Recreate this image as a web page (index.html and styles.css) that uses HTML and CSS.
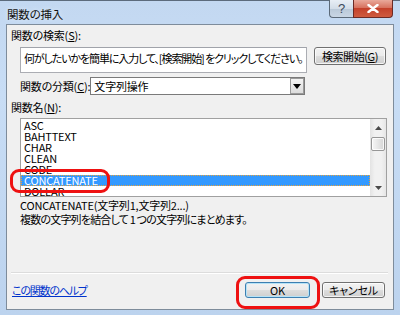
FILE: index.html
```html
<!DOCTYPE html>
<html lang="ja">
<head>
<meta charset="utf-8">
<title>関数の挿入</title>
<link rel="stylesheet" href="styles.css">
</head>
<body>
<div class="window">
  <div class="titlebar">
    <span class="title">関数の挿入</span>
    <div class="caption-btns">
      <div class="cap-help">?</div>
      <div class="cap-close">
        <svg width="12" height="9" viewBox="0 0 12 9"><path d="M1.5 1 L10.5 8 M10.5 1 L1.5 8" stroke="#fff" stroke-width="2.4" stroke-linecap="round"/></svg>
      </div>
    </div>
  </div>
  <div class="client">
    <div class="label label-top">関数の検索(<u>S</u>):</div>
    <div class="search-row">
      <div class="search-box">何がしたいかを簡単に入力して、[検索開始] をクリックしてください。</div>
      <div class="btn btn-search">検索開始(<u>G</u>)</div>
    </div>
    <div class="cat-row">
      <span class="label cat-label">関数の分類(<u>C</u>):</span>
      <div class="select">
        <span class="select-text">文字列操作</span>
        <span class="select-arrow">
          <svg width="8" height="5" viewBox="0 0 8 5"><path d="M0 0 H8 L4 5 Z" fill="#000"/></svg>
        </span>
      </div>
    </div>
    <div class="label label-list">関数名(<u>N</u>):</div>
    <div class="listbox">
      <ul class="items">
        <li>ASC</li>
        <li>BAHTTEXT</li>
        <li>CHAR</li>
        <li>CLEAN</li>
        <li>CODE</li>
        <li class="selected">CONCATENATE</li>
        <li>DOLLAR</li>
      </ul>
      <div class="scrollbar">
        <div class="sb-btn"><svg width="7" height="4" viewBox="0 0 7 4"><path d="M0 4 L3.5 0 L7 4 Z" fill="#4a4a4a"/></svg></div>
        <div class="sb-track"><div class="sb-thumb"></div></div>
        <div class="sb-btn"><svg width="7" height="4" viewBox="0 0 7 4"><path d="M0 0 L7 0 L3.5 4 Z" fill="#4a4a4a"/></svg></div>
      </div>
    </div>
    <div class="desc">
      <div class="desc-line">CONCATENATE(文字列1,文字列2...)</div>
      <div class="desc-line desc-jp">複数の文字列を結合して 1 つの文字列にまとめます。</div>
    </div>
    <div class="sep"></div>
    <div class="footer">
      <a class="help-link" href="#">この関数のヘルプ</a>
      <div class="footer-btns">
        <div class="btn btn-ok">OK</div>
        <div class="btn btn-cancel">キャンセル</div>
      </div>
    </div>
  </div>
  <div class="annot annot-list"></div>
  <div class="annot annot-ok"></div>
</div>
</body>
</html>
```
FILE: styles.css
```css
* { box-sizing: border-box; }
html, body { margin: 0; padding: 0; }
body {
  width: 400px;
  height: 315px;
  overflow: hidden;
  font-family: "Noto Sans CJK JP", "Liberation Sans", sans-serif;
  font-size: 11px;
  letter-spacing: -0.2px;
  font-feature-settings: "palt";
  color: #000;
}
.window {
  position: relative;
  width: 400px;
  height: 315px;
  padding: 0 6px 5px 6px;
  display: flex;
  flex-direction: column;
  background: linear-gradient(to bottom, #c3d8f1 0%, #c8ddf5 30%, #bcd3ee 100%);
  border-top: 1px solid #5c6b7c;
}
.titlebar {
  height: 23px;
  display: flex;
  justify-content: space-between;
  align-items: flex-start;
  flex: 0 0 auto;
}
.title {
  margin-left: 1px;
  margin-top: 5px;
  line-height: 16px;
  font-size: 11.5px;
  color: #111;
  text-shadow: 0 0 4px #e6f0fb;
}
.caption-btns {
  display: flex;
  margin-top: -1px;
  margin-right: 1px;
}
.cap-help {
  width: 24px;
  height: 18px;
  border: 1px solid #5b6978;
  border-top: none;
  border-right: none;
  border-bottom-left-radius: 4px;
  background: linear-gradient(to bottom, #e8eef5 0%, #d3dde8 50%, #b9c8d8 51%, #c9d6e4 100%);
  color: #3c4a5a;
  font-family: "Liberation Sans", sans-serif;
  font-size: 13px;
  line-height: 17px;
  text-align: center;
}
.cap-close {
  width: 40px;
  height: 18px;
  border: 1px solid #6b2a25;
  border-top: none;
  border-bottom-right-radius: 4px;
  background: linear-gradient(to bottom, #e9a99b 0%, #d7725f 45%, #c4412b 50%, #cf5b3f 100%);
  display: flex;
  align-items: center;
  justify-content: center;
}
.client {
  flex: 1 1 auto;
  background: #f0f0f0;
  border: 1px solid #7e8c9b;
  display: flex;
  flex-direction: column;
}
.label {
  line-height: 14px;
  height: 14px;
  white-space: nowrap;
}
.label-top { margin: 3px 0 0 4px; }
.search-row {
  display: flex;
  gap: 7px;
  margin: 5px 0 0 13px;
  align-items: flex-start;
}
.search-box {
  width: 287px;
  height: 26px;
  background: #fff;
  border: 1px solid #abadb3;
  border-top-color: #a0a3aa;
  padding: 3px 0 0 3px;
  line-height: 14px;
  white-space: nowrap;
  overflow: hidden;
  letter-spacing: -1.1px;
}
.btn {
  height: 18px;
  border: 1px solid #707070;
  border-radius: 3px;
  background: linear-gradient(to bottom, #f2f2f2 0%, #ebebeb 50%, #dddddd 51%, #cfcfcf 100%);
  box-shadow: inset 0 0 0 1px rgba(255,255,255,0.75);
  text-align: center;
  line-height: 16px;
  white-space: nowrap;
}
.btn-search { width: 72px; letter-spacing: -0.4px; }
.cat-row {
  display: flex;
  align-items: center;
  margin: 4px 0 0 13px;
}
.cat-label { flex: 0 0 70px; }
.select {
  width: 215px;
  height: 18px;
  background: #fff;
  border: 1px solid #7a7a7a;
  display: flex;
  align-items: stretch;
}
.select-text {
  flex: 1 1 auto;
  padding-left: 3px;
  line-height: 16px;
}
.select-arrow {
  width: 14px;
  border: 1px solid #9a9a9a;
  background: linear-gradient(to bottom, #f3f3f3, #dcdcdc);
  display: flex;
  align-items: center;
  justify-content: center;
}
.label-list { margin: 5px 0 0 4px; }
.listbox {
  margin: 4px 0 0 13px;
  width: 367px;
  height: 79px;
  border: 1px solid #a0a0a0;
  background: #fff;
  display: flex;
}
.items {
  list-style: none;
  margin: 0;
  padding: 1px 0 0 0;
  flex: 1 1 auto;
  overflow: hidden;
}
.items li {
  height: 11px;
  line-height: 11px;
  padding-left: 3px;
  white-space: nowrap;
}
.items li.selected {
  background: #3399ff;
  color: #fff;
  outline: 1px dotted #e8a33a;
  outline-offset: -1px;
}
.scrollbar {
  width: 16px;
  flex: 0 0 16px;
  display: flex;
  flex-direction: column;
  background: linear-gradient(to right, #e3e3e3, #f1f1f1 30%, #f1f1f1 70%, #e6e6e6);
}
.sb-btn {
  height: 17px;
  display: flex;
  align-items: center;
  justify-content: center;
}
.sb-track {
  flex: 1 1 auto;
  padding: 1px 1px 0 1px;
}
.sb-thumb {
  height: 14px;
  border: 1px solid #979797;
  border-radius: 2px;
  background: linear-gradient(to right, #f6f6f6, #e6e6e6 50%, #d6d6d6);
  box-shadow: inset 0 0 0 1px rgba(255,255,255,0.8);
}
.desc { margin: 1px 0 0 13px; }
.desc-line {
  line-height: 14px;
  height: 14px;
  white-space: nowrap;
}
.desc-jp { letter-spacing: -0.8px; }
.sep {
  margin: 46px 5px 0 4px;
  height: 2px;
  border-top: 1px solid #dcdcdc;
  border-bottom: 1px solid #ffffff;
}
.footer {
  display: flex;
  align-items: center;
  justify-content: space-between;
  margin: 8px 8px 0 5px;
  height: 16px;
}
.help-link {
  color: #0033cc;
  text-decoration: underline;
  line-height: 14px;
  margin-top: -1px;
  letter-spacing: -1.2px;
}
.footer-btns {
  display: flex;
  gap: 12px;
}
.footer-btns .btn { height: 16px; line-height: 14px; }
.btn-ok {
  width: 65px;
  border-color: #3c7fb1;
  box-shadow: inset 0 0 0 1px #b6e3f7;
}
.btn-cancel { width: 63px; }
.annot {
  position: absolute;
  border: 3px solid #ee1111;
  border-radius: 9px;
  pointer-events: none;
}
.annot-list { left: 10px; top: 168px; width: 100px; height: 24px; }
.annot-ok { left: 236px; top: 275px; width: 84px; height: 33px; }
```
